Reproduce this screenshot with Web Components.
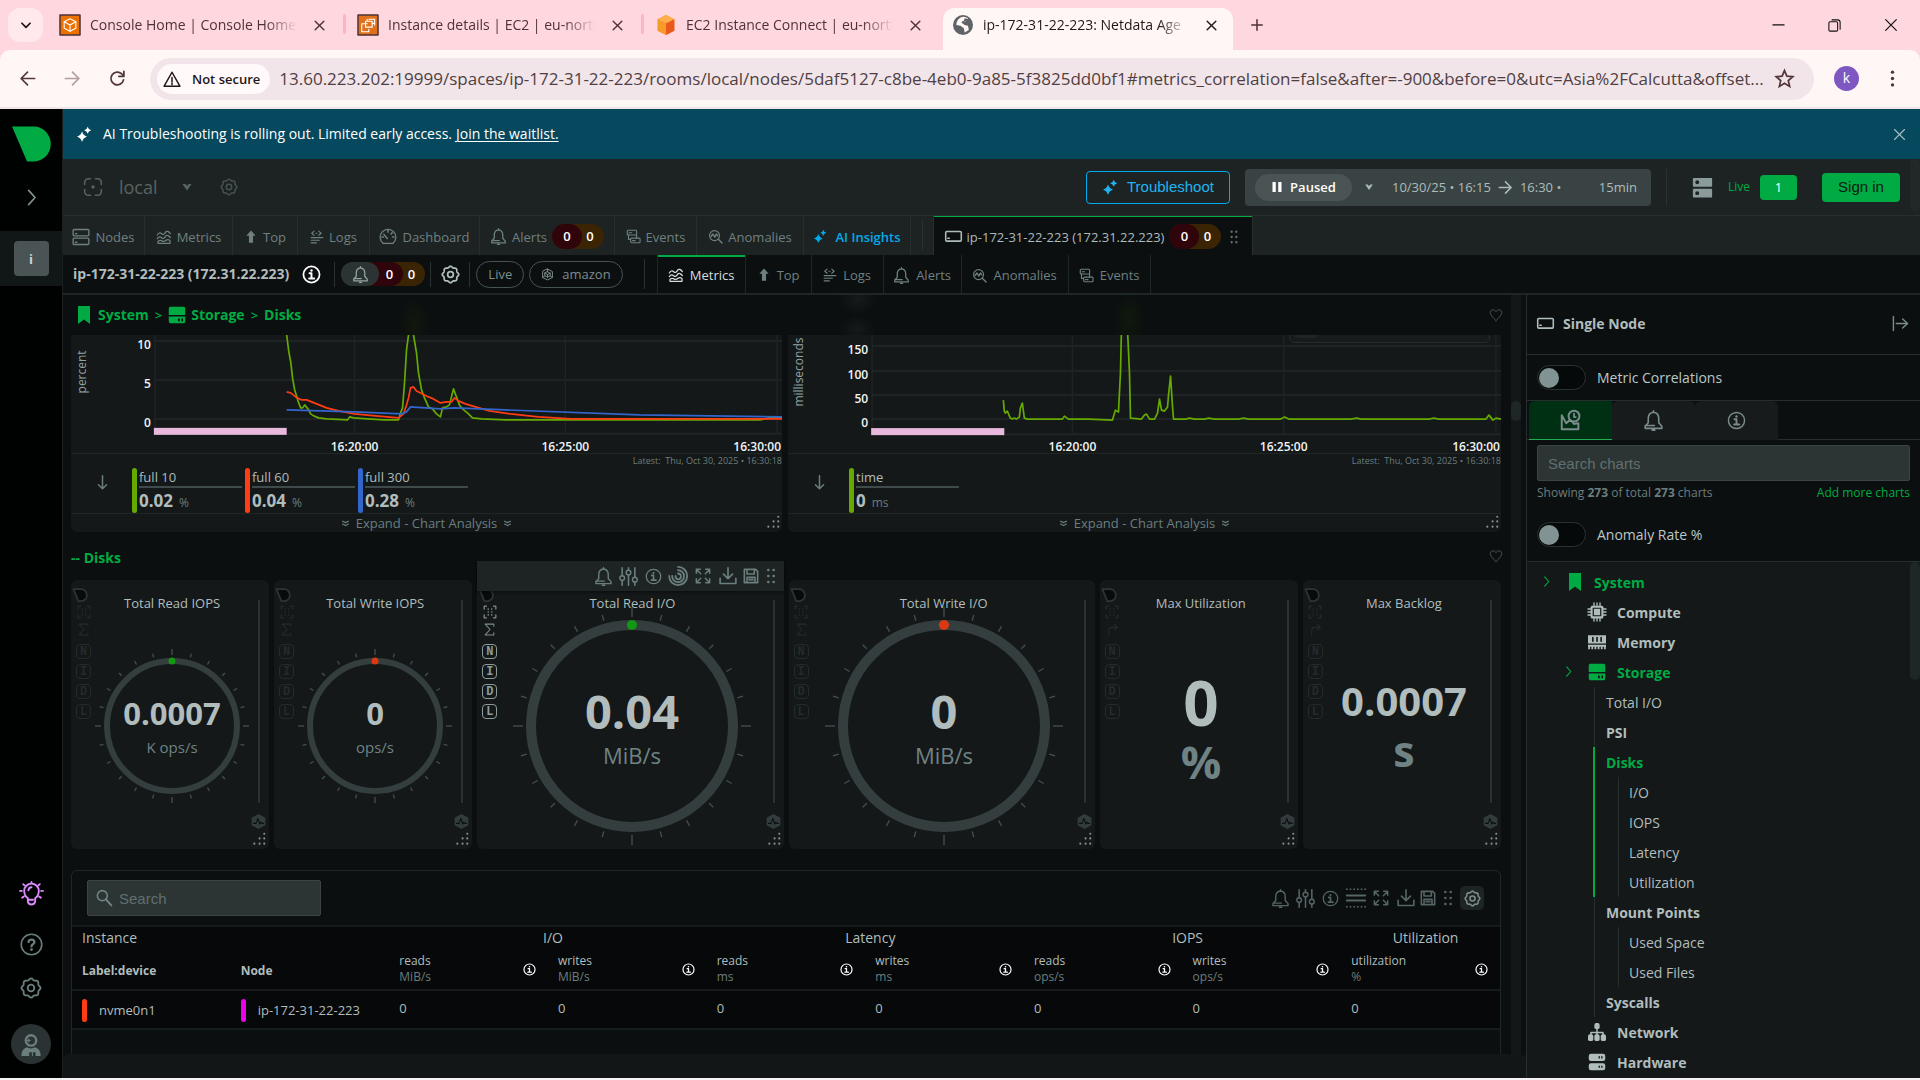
<!DOCTYPE html>
<html lang="en">
<head>
<meta charset="utf-8">
<title>ip-172-31-22-223: Netdata Agent</title>
<style>
  html, body { margin: 0; height: 100%; }
  body {
    font-family: "Open Sans", "Noto Sans", sans-serif;
    font-size: 13px; line-height: 18px; color: #aebbbb; background: #f4f4f4;
    --green: #00ab44; --muted: #6b7e7e; --dim: #6f8080; --text: #b1bdbd; --bright: #fff;
    --line: #1f2626; --card: #141819; --bg: #0b0f10; --bar: #1d2323;
    overflow: hidden;
  }
</style>
</head>
<body>
<nd-window></nd-window>
<script>
const wavy = (() => {
  let d = '';
  for (let i = 0; i <= 96; i++) {
    const a = i / 96 * Math.PI * 2, r = 9.6 + 0.8 * Math.cos(a * 8);
    d += (i ? 'L' : 'M') + (12 + r * Math.sin(a)).toFixed(2) + ' ' + (12 - r * Math.cos(a)).toFixed(2);
  }
  return `<path d="${d}Z"/><circle cx="12" cy="12" r="3.6"/>`;
})();
const dots = (pts, r = 1.5) => pts.map(p => `<circle cx="${p[0]}" cy="${p[1]}" r="${r}" fill="currentColor" stroke="none"/>`).join('');
const ICONS = {
  gear: wavy,
  down: '<path d="M5 9l7 7 7-7" stroke-width="3"/>',
  caret: '<path d="M3 6h6l3 4 3-4h6l-9 13z" fill="currentColor" stroke="none"/>',
  right: '<path d="M8 2l9 10-9 10" stroke-width="2.4"/>',
  close: '<path d="M4 4l16 16M20 4L4 20" stroke-width="2.6"/>',
  thinclose: '<path d="M4 4l16 16M20 4L4 20" stroke-width="1.8"/>',
  plus: '<path d="M12 3v18M3 12h18" stroke-width="2.6"/>',
  min: '<path d="M3 11h18" stroke-width="1.7"/>',
  restore: '<rect x="3" y="6" width="14" height="15" rx="2" stroke-width="1.7"/><path d="M8 3h9q4 0 4 4v11" stroke-width="1.7"/>',
  back: '<path d="M22 12H3M12 3l-9 9 9 9" stroke-width="2.4"/>',
  forward: '<path d="M2 12h19M12 3l9 9-9 9" stroke-width="2.4"/>',
  reload: '<path d="M20.5 14a9 9 0 1 1-2.500-8.500L21 8M21 2v7h-7" stroke-width="2.5"/>',
  warn: '<path d="M12 3L1.500 21.500h21z"/><path d="M12 10v6M12 17.500v2"/>',
  star: '<path d="M12 2l3 7 7.500.7-5.700 5 1.700 7.300-6.500-3.900L5.500 22l1.700-7.300-5.700-5L9 9z" stroke-width="2.2" stroke-linejoin="miter"/>',
  menu: dots([[12, 3], [12, 12], [12, 21]], 2.4),
  awshome: '<rect width="24" height="24" fill="#ed7100"/><g stroke="#fff" stroke-width="1.3"><path d="M12 4.500l7 3.700v7.600l-7 3.700-7-3.700V8.200z"/><path d="M5 8.200l7 3.800 7-3.800M12 12v7.500"/></g>',
  ec2: '<rect width="24" height="24" fill="#e0701a"/><g stroke="#fff" stroke-width="1.3"><rect x="9" y="7.500" width="8" height="7"/><path d="M13 5h7v7M11 10.500H4.500V20H13v-3M11 7V5M17 10h3"/></g>',
  ec2c: '<path d="M12 0l10 5v14l-10 5-10-5V5z" fill="#f58536" stroke="none"/><path d="M2 5l10 5v14L2 19z" fill="#f89a2a" stroke="none"/><path d="M22 5l-10 5v14l10-5z" fill="#e8591c" stroke="none"/><path d="M12 0l10 5-10 5L2 5z" fill="#ffae4a" stroke="none"/>',
  globe: '<circle cx="12" cy="12" r="12" fill="#5f6368" stroke="none"/><path d="M9 3q5-2 9 1l-3 4-3-1-2 2 4 3 4 1 1 5-5 3-1-5-4-3-5-1q0-6 5-9z" fill="#fff7f6" stroke="none"/><path d="M14 4l-1 3 2 1 4-3z" fill="#5f6368" stroke="none"/>',
  logo: '<path d="M0 1h14a10 10.500 0 0 1 0 22h-4.500z" fill="#00ab44" stroke="none"/>',
  logosm: '<path d="M2 3h11a8 8.500 0 0 1 0 17H9z" fill="#080b0b" stroke-width="2.4"/>',
  sparkle: '<g fill="currentColor" stroke="none"><path d="M8.500 7.500q1.500 6 7 7.500-5.500 1.500-7 7.500-1.500-6-7-7.500 5.500-1.500 7-7.500z"/><path d="M16.500 1q.9 4 5 5-4.100 1-5 5-.9-4-5-5 4.100-1 5-5z"/></g>',
  local: '<path d="M9 2H7Q2 2 2 7v2M15 2h2q5 0 5 5v2M9 22H7q-5 0-5-5v-2M15 22h2q5 0 5-5v-2" stroke-width="1.8"/><circle cx="12" cy="12" r="2" fill="currentColor" stroke="none"/>',
  nodes: '<rect x="1.500" y="2" width="21" height="8.500" rx="1.500"/><rect x="1.500" y="13.500" width="21" height="8.500" rx="1.500"/><path d="M4.500 7.500h2M4.500 19h2"/>',
  metrics: '<path d="M2 9q3-5 6.500-2t6-2.500q3-3 7 2.500M2 14.500q3-4.500 6.500-1.500t6-2.500q3.500-2.500 7 2.500M3 18.500v3h18v-4q-3-3-6-.5-3.500 3-6.500.5-3-1.500-5.500 1z" stroke-width="1.900"/>',
  top: '<path d="M12 1l8 9h-4.500v12h-7V10H4z" fill="currentColor" stroke="none"/>',
  logs: '<path d="M7 2L3 5.500 7 9M15 2l4 3.500L15 9M10 5.500h2M2 13h20M2 17.500h14M2 22h9" stroke-width="2"/>',
  dash: '<path d="M5.500 20.500a10.500 10.500 0 1 1 13 0z"/><path d="M11 14L6.500 8.500M12 3v2.500M20 12h-2M4 12h2M17.500 6.500l-1.500 1.500" stroke-width="2"/>',
  bell: '<path d="M12 2.500q6 .5 6 7.500v4.500l3.500 4v2.500h-19v-2.500l3.500-4V10q0-7 6-7.500zM2.500 17.800H13M10.500 23h3M12 1v1.500"/>',
  events: '<rect x="2" y="2" width="15" height="7.500" rx="1.500"/><rect x="7.500" y="14.500" width="15" height="7.500" rx="1.500"/><path d="M4 9.500v7h3M17 9.500v5M5 6h4M10.500 18.500h4"/>',
  anom: '<circle cx="10.500" cy="10.500" r="8"/><path d="M16.500 16.500l6 6M5 12l3-4 3 5 2.500-5 2 3" stroke-width="2.200"/>',
  node: '<rect x="1" y="5" width="22" height="13.500" rx="1.500" stroke-width="2.200"/><path d="M4 14.500h2" stroke-width="2.200"/>',
  grip: dots([[8, 3], [16, 3], [8, 12], [16, 12], [8, 21], [16, 21]], 2),
  info: '<circle cx="12" cy="12" r="10.200"/><path d="M9.500 10.500H12v6.500M9 17h6.500" stroke-width="2.400"/><circle cx="12" cy="7" r="1.500" fill="currentColor" stroke="none"/>',
  cube: '<path d="M12 2l9 4.500v11L12 22l-9-4.500v-11z"/><path d="M12 7l5 2.500v5L12 17l-5-2.500v-5zM7 9.500l5 2.500 5-2.500M12 12v5M12 2v5M3 17.500l4-3M21 17.500l-4-3"/>',
  pause: '<path d="M3 2h6.500v20H3zM14.500 2H21v20h-6.500z" fill="currentColor" stroke="none"/>',
  server: '<rect x="1" y="1" width="22" height="10" rx="1" fill="currentColor" stroke="none"/><rect x="1" y="13.500" width="22" height="10" rx="1" fill="currentColor" stroke="none"/><circle cx="6" cy="6" r="2.200" fill="#1d2323" stroke="none"/><circle cx="6" cy="18.500" r="2.200" fill="#1d2323" stroke="none"/>',
  bulb: '<path d="M8.500 16.500Q5 14 5 9.500a7 7 0 0 1 14 0q0 4.500-3.500 7v3.500q-1 2.500-3.500 2.500t-3.500-2.500zM8.500 18h5M9 9q.5-3 3-3M12 1v1.200M1 9.500h1.700M21.300 9.500H23M4 3l1.200 1M20 3l-1.200 1M3 16l1.500-1M21 16l-1.500-1"/>',
  help: '<circle cx="12" cy="12" r="10.700"/><path d="M9 9.500Q9 7 12 7t3 2.500q0 1.500-1.500 2.300T12 14" stroke-width="2.400"/><circle cx="12" cy="17.300" r="1.500" fill="currentColor" stroke="none"/>',
  astro: '<circle cx="12" cy="7" r="5.700" stroke-width="2.600"/><path d="M8 7h3M9.500 5.500v3" stroke-width="1.300"/><path d="M1.500 24q0-7.500 6-9.500 4.500 2.500 9 0 6 2 6 9.500H17v-4h-3v4h-1v-4h-3v4z" fill="currentColor" stroke="none"/>',
  bookmark: '<path d="M4 0h16v24l-8-6-8 6z" fill="currentColor" stroke="none"/>',
  disk: '<path d="M3 1h18q2 0 2 2.500V12H1V3.500Q1 1 3 1zM1 14h22v6q0 3-2 3H3q-2 0-2-3z" fill="currentColor" stroke="none"/><path d="M14.500 17.500v2M19 17.500v2" stroke="#0b0f10" stroke-width="2.200"/>',
  heart: '<path d="M12 21.500Q2 13 2 7.500 2.500 3 7 3q3.500 0 5 3.500Q13.500 3 17 3q4.500 0 5 4.500Q22 13 12 21.500z" stroke-width="1.600"/>',
  arrowdown: '<path d="M12 1v21M5.500 15.500L12 22l6.500-6.500" stroke-width="2.400"/>',
  dbl: '<path d="M2 4l10 5 10-5M2 14l10 5 10-5" stroke-width="4"/>',
  resize: dots([[21, 3], [13, 11], [21, 11], [4, 20], [13, 20], [21, 20]], 1.800),
  sliders: '<path d="M4 1v10M4 17v6M12 1v3M12 10v13M20 1v12M20 19v4" stroke-width="2"/><circle cx="4" cy="14" r="3"/><circle cx="12" cy="7" r="3"/><circle cx="20" cy="16" r="3"/>',
  radar: '<path d="M12 1a11 11 0 0 1 0 22A10.500 10.500 0 0 1 1.500 12M12 5a7 7 0 0 1 0 14.500A7.500 7.500 0 0 1 5 12M12 9a3.500 3.500 0 0 1 0 7 4 4 0 0 1-3-4" stroke-width="2.200"/>',
  expand: '<path d="M2 8V2h6M16 2h6v6M22 16v6h-6M8 22H2v-6M2 2l6.500 6.500M22 2l-6.500 6.500M22 22l-6.500-6.500M2 22l6.500-6.500" stroke-width="2.200"/>',
  download: '<path d="M12 1v14M6 9.500l6 6 6-6M1.500 15v7h21v-7" stroke-width="2.200"/>',
  save: '<path d="M2 2h17l3 3v17H2zM6 2v7h11V2M6 22v-8h12v8M9 17.500h6" stroke-width="2.400"/>',
  rows: '<path d="M1 9h22M1 15h22" stroke-width="2.400"/><path d="M0 1.500h24M0 22.500h24" stroke-dasharray="2 2.400" stroke-linecap="butt" stroke-width="2"/>',
  bracket: '<path d="M2 7V2h4M18 2h4v5M22 17v5h-4M6 22H2v-5" stroke-width="2.200"/>' + dots([[9, 7], [15, 7], [9, 12], [15, 12], [9, 17], [15, 17]], 1.400),
  sigma: '<path d="M20 6V2H4l9 10-9 10h16v-4" stroke-width="2"/>',
  curve: '<path d="M5 22v-8q0-6 6-6h10M16 3l5 5-5 5" stroke-width="2"/>',
  hex: '<path d="M12 0l11 6v12l-11 6-11-6V6z" fill="currentColor" stroke="none"/><path d="M4 15h4l3-8 3 9 2-3 1.500 2H20" stroke="#0b0f10" stroke-width="1.700"/>',
  search: '<circle cx="9.500" cy="8.500" r="7.500" stroke-width="2.400"/><path d="M15 14l8 9" stroke-width="3"/>',
  collapse: '<path d="M2 2v20M6 12h16M15 5.500l7 6.500-7 6.500" stroke-width="2"/>',
  chart: '<path d="M2 6v16h19v-7l-5 1-4-5-5 4z" stroke-width="2.200"/><circle cx="16" cy="7" r="6.200" stroke-width="2.200" fill="#003014"/><path d="M16 4v4h2" stroke-width="2"/>',
  cpu: '<rect x="3.500" y="3.500" width="17" height="17" rx="2" fill="currentColor" stroke="none"/><rect x="7" y="7" width="10" height="10" fill="none" stroke="#141819" stroke-width="1.600"/><path d="M8 0v24M12 0v4M12 20v4M16 0v4M16 20v4M8 0v4M0 8h4M0 12h4M0 16h4M20 8h4M20 12h4M20 16h4" stroke-dasharray="4 16" stroke-width="1.800"/>',
  ram: '<path d="M0 3h24v11H0z" fill="currentColor" stroke="none"/><path d="M6.500 6v5M12 6v5M17.500 6v5" stroke="#141819" stroke-width="2.200"/><path d="M0 17h24M1.500 18v3.500M5.700 18v3.500M9.900 18v3.500M14.100 18v3.500M18.300 18v3.500M22.500 18v3.500"  stroke-width="2.400" stroke-linecap="butt"/>',
  net: '<path d="M12 7v6M4 16v-3.500h16V16M12 13v3" stroke-width="2"/><g fill="currentColor" stroke="none"><rect x="8.500" y="0" width="7" height="8" rx="2.500"/><rect x="0" y="15" width="7" height="9" rx="2.500"/><rect x="8.500" y="15" width="7" height="9" rx="2.500"/><rect x="17" y="15" width="7" height="9" rx="2.500"/></g>',
  hw: '<g fill="currentColor" stroke="none"><rect x="1" y="1" width="22" height="9.500" rx="3"/><rect x="1" y="13.500" width="22" height="9.500" rx="3"/></g><path d="M15 5v1.500M18.500 5v1.500M15 17.500V19M18.500 17.500V19" stroke="#141819" stroke-width="1.800"/>'
};

const BASE = `
  *, *::before, *::after { box-sizing: border-box; }
  button { font: inherit; color: inherit; background: none; border: 0; padding: 0; margin: 0; display: flex; align-items: center; cursor: pointer; }
  a { color: inherit; text-decoration: none; }
  input { font: inherit; color: inherit; margin: 0; }`;
function define(name, css, render) {
  customElements.define(name, class extends HTMLElement {
    constructor() { super(); this.attachShadow({ mode: 'open' }); }
    connectedCallback() {
      const a = (k, d = '') => this.getAttribute(k) ?? d;
      this.shadowRoot.innerHTML = `<style>${BASE}${css}</style>${typeof render === 'function' ? render(a, this) : render}`;
    }
  });
}

define('nd-icon', `:host { display: inline-flex; flex: none; width: var(--s, 16px); height: var(--s, 16px); } svg { width: 100%; height: 100%; display: block; overflow: visible; }`,
  a => {
    const s = a('size', '16');
    return `<style>:host { --s: ${s}px; }</style><svg viewBox="0 0 24 24" fill="none" stroke="currentColor" stroke-width="${a('w', '1.8')}" stroke-linecap="round" stroke-linejoin="round" aria-hidden="true">${ICONS[a('name')]}</svg>`;
  });

/* ---------- browser frame ---------- */
define('br-tab', `
  :host { display: flex; flex: 0 1 298px; height: 42px; align-items: center; padding: 0 14px 8px 15px; gap: 10px; color: #4e3238; position: relative; min-width: 0; }
  :host([sep])::after { content: ""; position: absolute; right: -3px; top: 6px; width: 3px; height: 20px; border-radius: 2px; background: #ffb4c2; }
  :host([active]) { background: #fff7f6; border-radius: 12px 12px 0 0; color: #221518; flex-basis: 290px; padding-left: 10px; padding-right: 12px; margin-left: 4px; }
  .t { flex: 1; min-width: 0; overflow: hidden; white-space: nowrap; -webkit-mask-image: linear-gradient(90deg, #000 85%, transparent); mask-image: linear-gradient(90deg, #000 85%, transparent); }
  button { flex: none; margin: 0 1px 0 4px; padding: 2px; }`,
  a => `<nd-icon name="${a('icon')}" size="20"></nd-icon><span class="t"><slot></slot></span><button aria-label="Close tab"><nd-icon name="close" size="13"></nd-icon></button>`);

define('br-frame', `
  :host { display: block; flex: none; font-size: 14px; line-height: 20px; }
  .strip { height: 50px; background: #ffd7de; display: flex; align-items: flex-start; padding: 8px 0 0 8px; }
  .find { width: 35px; height: 34px; border-radius: 12px; background: #ffe9ec; justify-content: center; color: #221518; margin-right: 2px; }
  .plus { margin: 10px 0 0 17px; color: #4e3238; }
  .win { margin-left: auto; display: flex; gap: 41px; padding: 9px 21px 0 0; color: #111; }
  .tool { height: 59px; background: #fff7f6; border-bottom: 2px solid #f3e4e7; border-radius: 10px 10px 0 0; display: flex; align-items: center; padding: 0 19px; color: #53363c; }
  .nav { display: flex; gap: 28px; margin-right: 24px; }
  .nav button:nth-child(2) { opacity: .45; }
  .omni { flex: 1; min-width: 0; height: 42px; border-radius: 21px; background: #f2e5e9; display: flex; align-items: center; padding: 0 20px 0 7px; }
  .chip { height: 30px; border-radius: 15px; background: #fff9f9; padding: 0 10px 0 6px; gap: 11px; color: #221518; font-weight: 600; font-size: 13px; flex: none; }
  input { flex: 1; min-width: 0; border: 0; background: none; outline: 0; padding: 0; margin: 0 8px 0 9px; font-size: 17px; color: #4f3f43; text-overflow: ellipsis; }
  .av { width: 25px; height: 25px; border-radius: 50%; background: #7e57c2; color: #fff; justify-content: center; font-size: 14px; margin: 0 25px 0 20px; padding-bottom: 2px; }
  .under { background: #ffd7de; }`,
  `<div class="strip"><button class="find" aria-label="Search tabs"><nd-icon name="down" size="14"></nd-icon></button>
    <br-tab icon="awshome" sep>Console Home | Console Home</br-tab><br-tab icon="ec2" sep>Instance details | EC2 | eu-north</br-tab><br-tab icon="ec2c">EC2 Instance Connect | eu-north</br-tab><br-tab icon="globe" active>ip-172-31-22-223: Netdata Age</br-tab>
    <button class="plus" aria-label="New tab"><nd-icon name="plus" size="14"></nd-icon></button>
    <div class="win"><button aria-label="Minimize"><nd-icon name="min" size="15"></nd-icon></button><button aria-label="Restore"><nd-icon name="restore" size="15"></nd-icon></button><button aria-label="Close"><nd-icon name="thinclose" size="16"></nd-icon></button></div></div>
   <div class="under"><div class="tool"><div class="nav"><button aria-label="Back"><nd-icon name="back" size="17"></nd-icon></button><button aria-label="Forward"><nd-icon name="forward" size="17"></nd-icon></button><button aria-label="Reload"><nd-icon name="reload" size="17"></nd-icon></button></div>
    <div class="omni"><button class="chip"><nd-icon name="warn" size="18" w="2"></nd-icon>Not secure</button><input aria-label="Address" value="13.60.223.202:19999/spaces/ip-172-31-22-223/rooms/local/nodes/5daf5127-c8be-4eb0-9a85-5f3825dd0bf1#metrics_correlation=false&amp;after=-900&amp;before=0&amp;utc=Asia%2FCalcutta&amp;offset..."><button aria-label="Bookmark"><nd-icon name="star" size="19"></nd-icon></button></div>
    <button class="av">k</button><button aria-label="Menu"><nd-icon name="menu" size="17"></nd-icon></button></div></div>`);

/* ---------- application shell ---------- */
define('nd-sidebar', `
  :host { display: flex; flex-direction: column; align-items: center; width: 63px; flex: none; background: #000201; border-right: 1px solid #1b2020; color: var(--muted); padding: 16px 0 14px; }
  .sp { width: 100%; height: 55px; background: #111616; display: flex; align-items: center; justify-content: center; margin-top: 25px; }
  .sp button { width: 35px; height: 35px; border-radius: 4px; background: #4a5454; color: #cdd6d6; justify-content: center; font-weight: 700; font-size: 13px; }
  .logo { margin: 0; } .chev { margin-top: 26px; color: #7f9191; }
  .bulb { margin-top: auto; color: #dd8cff; } .q { margin-top: 27px; } .g { margin-top: 21px; }
  .me { margin-top: 25px; width: 40px; height: 40px; border-radius: 50%; background: #2a3233; justify-content: center; }
  .me nd-icon { margin-top: 2px; }`,
  `<button class="logo" aria-label="Netdata"><nd-icon name="logo" size="38"></nd-icon></button><button class="chev" aria-label="Expand"><nd-icon name="right" size="17"></nd-icon></button>
   <div class="sp"><button>i</button></div>
   <button class="bulb" aria-label="Tips"><nd-icon name="bulb" size="25"></nd-icon></button><button class="q" aria-label="Help"><nd-icon name="help" size="23" w="1.7"></nd-icon></button><button class="g" aria-label="Settings"><nd-icon name="gear" size="22" w="2"></nd-icon></button>
   <button class="me" aria-label="Profile"><nd-icon name="astro" size="22"></nd-icon></button>`);

define('nd-banner', `
  :host { display: flex; align-items: center; height: 50px; flex: none; background: #06485e; color: #fff; padding: 0 13px; font-size: 14px; }
  nd-icon { margin-right: 10px; } a { text-decoration: underline; text-underline-offset: 2px; } p { margin: 0; flex: 1; } button nd-icon { margin: 0; color: #a9bfc6; } span { padding-right: 4px; }`,
  `<nd-icon name="sparkle" size="17"></nd-icon><p><span>AI Troubleshooting is rolling out. Limited early access.</span><a href="#">Join the waitlist.</a></p><button aria-label="Dismiss"><nd-icon name="thinclose" size="15" w="2.2"></nd-icon></button>`);

define('nd-header', `
  :host { display: flex; align-items: center; height: 57px; flex: none; background: var(--bar); border-bottom: 1px solid #272e2e; padding: 0 20px; color: #586464; position: relative; }
  .room { font-size: 18px; gap: 16px; } .room span { margin-right: 7px; } .cog { margin-left: 27px; color: #465252; }
  .ts { margin-left: auto; height: 33px; width: 144px; justify-content: center; gap: 8px; border: 1px solid #00abeb; border-radius: 4px; color: #1fb4f0; font-family: "Liberation Sans", sans-serif; font-size: 15px; }
  .time { margin-left: 15px; width: 406px; height: 37px; border-radius: 4px; background: #394343; display: flex; align-items: center; padding: 0 14px 0 10px; color: #aebbbb; font-size: 12px; white-space: nowrap; }
  .pill { height: 27px; width: 97px; border-radius: 14px; background: #4a5454; color: #fff; gap: 7px; justify-content: center; font-family: "Open Sans"; font-size: 13px; margin-right: 12px; font-weight: 600; }
  .time .d { margin-left: 18px; display: flex; align-items: center; gap: 7px; font-size: 13px; } .dur { margin-left: auto; font-size: 13px; }
  .sep { width: 1px; height: 37px; background: #2a3131; margin: 0 25px 0 15px; }
  .srv { color: #8b9b9b; } .live { color: var(--green); margin: 0 10px 0 15px; font-size: 12px; }
  .n { width: 37px; height: 25px; background: var(--green); border-radius: 4px; color: #fff; display: flex; justify-content: center; align-items: center; font-size: 13px; }
  .sign { margin-left: 25px; width: 78px; height: 29px; border-radius: 4px; background: var(--green); color: #0c1a12; justify-content: center; font-family: "Liberation Sans", sans-serif; font-size: 15px; }
  :host::after { content: ""; position: absolute; right: 0; top: 0; width: 10px; height: 52px; background: #222828; border-radius: 5px; }`,
  `<button class="room"><nd-icon name="local" size="20"></nd-icon><span>local</span><nd-icon name="caret" size="12"></nd-icon></button><button class="cog" aria-label="Room settings"><nd-icon name="gear" size="18" w="2"></nd-icon></button>
   <button class="ts"><nd-icon name="sparkle" size="17"></nd-icon>Troubleshoot</button>
   <div class="time"><button class="pill"><nd-icon name="pause" size="12"></nd-icon>Paused</button><nd-icon name="caret" size="10"></nd-icon><span class="d"><span>10/30/25 • 16:15</span><nd-icon name="forward" size="15" w="1.5"></nd-icon><span>16:30 •</span></span><span class="dur">15min</span></div>
   <span class="sep"></span><nd-icon class="srv" name="server" size="21"></nd-icon><span class="live">Live</span><span class="n">1</span><button class="sign">Sign in</button>`);

define('nd-counts', `
  :host { display: inline-flex; height: 25px; color: #fff; font-weight: 600; font-size: 13px; border-radius: 13px; background: #3a2403; flex: none; }
  span { width: 26px; display: flex; align-items: center; justify-content: center; }
  .c { background: #2f040a; border-radius: 13px; width: 30px; } .w { width: 22px; padding-right: 6px; }
  .b { width: 38px; color: #93a3a3; } :host([bell]) { background: linear-gradient(90deg, #2c3333 40%, #3a2403 40%); height: 24px; width: 84px; }
  :host([bell]) .b { background: #2c3333; border-radius: 12px; position: relative; z-index: 1; } :host([bell]) .c { margin-left: -12px; padding-left: 8px; width: 36px; border-radius: 0 12px 12px 0; }`,
  (a, el) => `${el.hasAttribute('bell') ? '<span class="b"><nd-icon name="bell" size="17"></nd-icon></span>' : ''}<span class="c">0</span><span class="w">0</span>`);

define('nd-tab', `
  :host { display: flex; flex: none; border-right: 1px solid #272e2e; color: var(--dim); font-size: 13px; white-space: nowrap; }
  button { gap: 5px; padding: 2px 0 0; } nd-counts { margin: -1px 0 0; }
  :host([active]) { background: var(--bg); color: #aebbbb; box-shadow: inset 0 1px var(--green); border-left: 1px solid #272e2e; }
  :host([sub]) { border-color: #1f2626; } :host([sub]) button { gap: 6px; } :host([sub][active]) { box-shadow: inset 0 2px var(--green); color: #d5dede; }
  :host([ai]) { color: #00abeb; } :host([ai]) button { gap: 7px; font-weight: 600; } .gr { color: #66716f; margin-left: 1px; }`,
  (a, el) => `<button><nd-icon name="${a('icon')}" size="${a('size', '16')}"></nd-icon><slot></slot>${el.hasAttribute('counts') ? '<nd-counts></nd-counts>' : ''}${el.hasAttribute('grip') ? '<nd-icon class="gr" name="grip" size="14"></nd-icon>' : ''}</button>`);

define('nd-tabbar', `
  :host { display: flex; height: 39px; flex: none; background: var(--bar); }
  .sep { width: 1px; height: 30px; margin: 4px 10px 0 11px; background: #2a3131; }
  nd-tab { justify-content: center; }
  .w1 { width: 82px; } .w2 { width: 88px; } .w3 { width: 65px; } .w4 { width: 72px; } .w5 { width: 110px; } .w6 { width: 135px; } .w7 { width: 82px; } .w8 { width: 107px; } .w9 { width: 107px; } .w10 { width: 320px; }`,
  `<nd-tab class="w1" icon="nodes" size="18">Nodes</nd-tab><nd-tab class="w2" icon="metrics">Metrics</nd-tab><nd-tab class="w3" icon="top" size="14">Top</nd-tab><nd-tab class="w4" icon="logs" size="14">Logs</nd-tab><nd-tab class="w5" icon="dash" size="18">Dashboard</nd-tab><nd-tab class="w6" icon="bell" size="17" counts>Alerts</nd-tab><nd-tab class="w7" icon="events" size="15">Events</nd-tab><nd-tab class="w8" icon="anom" size="15">Anomalies</nd-tab><nd-tab class="w9" icon="sparkle" size="15" ai>AI Insights</nd-tab><span class="sep"></span><nd-tab class="w10" icon="node" size="17" active counts grip>ip-172-31-22-223 (172.31.22.223)</nd-tab>`);

define('nd-nodebar', `
  :host { display: flex; align-items: center; height: 40px; flex: none; background: var(--bg); border-bottom: 2px solid var(--line); padding-left: 10px; color: var(--text); }
  b { font-size: 14px; margin-right: 13px; } .i { color: #fff; } .sep { width: 1px; height: 25px; background: #2a3131; }
  .s1 { margin: 0 6px 0 13px; } .s2 { margin: 0 10px 0 5px; } .s3 { margin: 0 6px 0 9px; } .s4 { margin-left: 16px; height: 30px; }
  .pill { height: 27px; border: 1px solid #475454; border-radius: 14px; padding: 0 11px; gap: 8px; color: #7d8d8d; font-size: 13px; margin-right: 5px; }
  nav { display: flex; align-self: stretch; margin-left: 12px; } nd-tab { justify-content: center; }
  .w1 { width: 89px; } .w2 { width: 66px; } .w3 { width: 72px; } .w4 { width: 78px; } .w5 { width: 107px; } .w6 { width: 82px; }`,
  `<b>ip-172-31-22-223 (172.31.22.223)</b><button class="i" aria-label="Node info"><nd-icon name="info" size="19" w="2.2"></nd-icon></button><span class="sep s1"></span><nd-counts bell></nd-counts><span class="sep s2"></span><button aria-label="Configure"><nd-icon name="gear" size="19" w="2.2"></nd-icon></button><span class="sep s3"></span>
   <button class="pill">Live</button><button class="pill"><nd-icon name="cube" size="13"></nd-icon>amazon</button><span class="sep s4"></span>
   <nav><nd-tab sub active class="w1" icon="metrics">Metrics</nd-tab><nd-tab sub class="w2" icon="top" size="14">Top</nd-tab><nd-tab sub class="w3" icon="logs" size="14">Logs</nd-tab><nd-tab sub class="w4" icon="bell" size="17">Alerts</nd-tab><nd-tab sub class="w5" icon="anom" size="15">Anomalies</nd-tab><nd-tab sub class="w6" icon="events" size="15">Events</nd-tab></nav>`);

/* ---------- charts ---------- */
const CHARTS = {
  psi: {
    unit: 'percent', uy: -37, ticks: [[6, '10'], [45, '5'], [84, '0']],
    lines: [
      ['#66aa00', '216,-6 216,0 218,16 220,27 222,44 224,55 228,68 230,73 232,73 234,70 238,75 240,79 243,81 248,83 256,84 277,85 279,82 283,83 297,84 313,85 328,85 330,78 332,73 334,48 336,15 338,0 338,-6 343,-6 343,0 346,18 348,38 351,55 354,63 358,72 362,74 366,79 370,82 372,73 376,72 379,70 383,54 386,62 389,70 392,74 397,78 402,83 411,84 435,85 690,85 700,83 712,83'],
      ['#ff3c14', '216,57 220,58 225,62 231,65 236,65 246,69 256,73 268,76 284,79 305,81 328,83 333,79 336,70 338,63 340,53 343,52 346,56 352,59 358,62 363,64 370,68 376,67 381,67 384,63 388,66 395,69 405,72 419,76 440,79 468,82 501,84 569,84 712,84'],
      ['#3366cc', '216,75 284,77 331,79 336,77 340,72 370,74 384,73 435,75 569,80 712,82']
    ]
  },
  time: {
    unit: 'milliseconds', uy: -37, ticks: [[11, '150'], [36, '100'], [60, '50'], [84, '0']],
    lines: [['#66aa00', '215,65 216,76 217,78 219,76 222,83 224,84 226,83 228,84 231,82 232,73 234,68 236,83 239,84 259,84 274,84 276,81 280,84 300,84 324,85 327,75 330,77 332,38 333,-6 339,-6 341,38 342,83 353,84 356,80 358,79 361,84 366,84 369,78 371,64 373,75 376,76 379,72 380,60 382,41 384,72 385,84 397,84 401,83 406,84 416,84 420,83 426,84 450,84 455,83 460,84 492,84 496,82 500,84 562,84 568,83 572,84 640,84 645,83 650,84 697,84 700,80 704,85 707,83 712,84']]
  }
};
define('nd-plot', `:host { display: block; height: 119px; border-bottom: 1px solid var(--line); } svg { width: 100%; height: auto; display: block; overflow: visible; } text { font-family: "Open Sans", sans-serif; }`,
  a => {
    const c = CHARTS[a('chart')];
    return `<svg viewBox="0 0 712 119" fill="none">
      <g stroke="#1e2425" stroke-width="2">${c.ticks.map(t => `<path d="M84 ${t[0]}H712"/>`).join('')}<path d="M84 99H712" />${[84, 284, 495, 707].map(x => `<path d="M${x} 0V99" stroke-width="1.5"/>`).join('')}</g>
      <rect x="83" y="93" width="133" height="7" fill="#e8b9dc"/>
      <g fill="#f2f5f5" font-size="12" font-weight="600">${c.ticks.map(t => `<text x="80" y="${t[0] + 8}" text-anchor="end">${t[1]}</text>`).join('')}
      <text x="284" y="116" text-anchor="middle">16:20:00</text><text x="495" y="116" text-anchor="middle">16:25:00</text><text x="711" y="116" text-anchor="end">16:30:00</text></g>
      <text transform="rotate(-90)" x="${c.uy}" y="15" text-anchor="middle" font-size="12" fill="#93a3a3">${c.unit}</text>
      ${c.lines.map(l => `<polyline points="${l[1]}" stroke="${l[0]}" stroke-width="1.7" stroke-linejoin="round"/>`).join('')}</svg>`;
  });

define('nd-dim', `:host { display: flex; width: 113px; height: 45px; gap: 2px; } i { width: 5px; border-radius: 3px; } div { flex: 1; padding-right: 3px; font-size: 13px; line-height: 18px; }
  .n { border-bottom: 2px solid #3f4b4b; height: 20px; padding: 0; } .v { display: flex; align-items: baseline; gap: 6px; padding: 0; line-height: 26px; color: var(--muted); font-size: 12px; } b { font-size: 17px; color: var(--text); }`,
  a => `<i style="background:${a('color')}"></i><div><div class="n"><slot></slot></div><div class="v"><b>${a('value')}</b><span>${a('unit')}</span></div></div>`);

define('nd-chart', `
  :host { display: block; background: var(--card); border-radius: 0 0 6px 6px; position: relative; height: 197px; overflow: hidden; }
  .latest { text-align: right; font-size: 9px; line-height: 14px; color: var(--muted); white-space: pre; }
  .legend { display: flex; height: 45px; padding-left: 24px; } .legend nd-icon { margin: 7px 22px 0 0; color: var(--muted); }
  .foot { height: 19px; border-top: 1px solid var(--line); justify-content: center; color: var(--muted); font-size: 13px; gap: 7px; width: 100%; }
  .rs { position: absolute; right: 2px; bottom: 3px; color: #87908f; }
  .tools { position: absolute; right: 11px; top: -22px; width: 201px; height: 30px; border: 1px solid #262c2c; border-radius: 5px; background: #171b1c; display: flex; justify-content: space-between; align-items: center; padding: 0 5px 3px 4px; color: #8b9797; }
  .tools span { display: flex; justify-content: center; align-items: center; width: 25px; height: 23px; background: #202626; border-radius: 5px; }`,
  (a, el) => `<nd-plot chart="${a('chart')}"></nd-plot>${el.hasAttribute('tools') ? '<div class="tools"><span><nd-icon name="hex" size="17"></nd-icon></span>' + ['arrowdown', 'curve', 'sliders', 'arrowdown', 'plus', 'search'].map(n => `<nd-icon name="${n}" size="16"></nd-icon>`).join('') + '</div>' : ''}<div class="latest">Latest:  Thu, Oct 30, 2025 • 16:30:18</div><div class="legend"><nd-icon name="arrowdown" size="15"></nd-icon><slot></slot></div><button class="foot"><nd-icon name="dbl" size="7"></nd-icon>Expand - Chart Analysis<nd-icon name="dbl" size="7"></nd-icon></button><nd-icon class="rs" name="resize" size="14" aria-hidden="true"></nd-icon>`);

const polar = (cx, cy, r, deg) => [(cx + r * Math.sin(deg * Math.PI / 180)).toFixed(1), (cy - r * Math.cos(deg * Math.PI / 180)).toFixed(1)].join(' ');
define('nd-gauge', `
  :host { display: block; position: relative; background: var(--card); border-radius: 6px; height: 269px; min-width: 0; }
  h3 { margin: 0; padding: 14px 0 0 4px; text-align: center; font-weight: 400; font-size: 13px; line-height: 18px; color: var(--text); }
  .rail { position: absolute; left: 5px; top: 25px; width: 15px; display: flex; flex-direction: column; align-items: center; color: #242b2b; }
  .lg { position: absolute; left: 1px; top: 7px; color: #2d3535; }
  .rail nd-icon { margin-bottom: 4px; } .rail button { width: 15px; height: 15px; border: 1px solid; border-radius: 4px; font: 700 12px/12px "Liberation Mono", monospace; justify-content: center; margin-top: 5px; }
  .rail nd-icon + button { margin-top: 4px; }
  :host([hover]) .rail { color: #7c8c8c; } :host([hover]) .rail button { color: #8b9b9b; }
  svg { position: absolute; left: calc(50% + 2px - 125px); top: 21px; width: 250px; height: 250px; }
  .track { position: absolute; right: 9px; top: 20px; width: 2px; height: 203px; background: #2a3132; }
  .hx { position: absolute; right: 3px; top: 234px; color: #333c3d; } .rs { position: absolute; right: 3px; bottom: 3px; color: #87908f; }
  .tb { position: absolute; left: 0; right: 0; top: -19px; height: 30px; background: #1e2424; display: flex; align-items: center; justify-content: flex-end; padding-right: 6px; color: var(--muted); box-shadow: 0 1px 3px #0008; }
  text { font-family: "Open Sans", sans-serif; text-anchor: middle; }`,
  (a, el) => {
    const r = +a('r', '0'), big = r > 80; let g = '';
    if (r) {
      for (let i = 0; i < 24; i++) {
        const card = i % 6 === 0, r0 = r + (big ? 8 : 6), r1 = r0 + (card ? (big ? 10 : 6) : (big ? 6 : 4));
        g += `<path d="M${polar(125, 125, r0, i * 15)}L${polar(125, 125, r1, i * 15)}" stroke="#465051" stroke-width="1.3"/>`;
      }
      g += `<circle cx="125" cy="125" r="${r}" stroke="#353e3f" stroke-width="${big ? 10 : 6}"/><circle cx="125" cy="${125 - r}" r="${big ? 5 : 3.5}" fill="${a('dot')}"/>`;
    }
    g += `<text x="125" y="${a('vy')}" font-size="${a('vs')}" font-weight="700" fill="#b1bdbd">${a('value')}</text><text x="125" y="${a('uy')}" font-size="${a('us')}" ${r ? '' : 'font-weight="700"'} fill="#6f8384">${a('unit')}</text>`;
    return `<nd-icon class="lg" name="logosm" size="17"></nd-icon><div class="rail"><nd-icon name="bracket" size="14"></nd-icon><nd-icon name="${r ? 'sigma' : 'curve'}" size="13"></nd-icon><button>N</button><button>I</button><button>D</button><button>L</button></div>
      <h3><slot></slot></h3><svg viewBox="0 0 250 250" fill="none">${g}</svg><span class="track"></span><nd-icon class="hx" name="hex" size="15"></nd-icon><nd-icon class="rs" name="resize" size="14"></nd-icon>
      ${el.hasAttribute('hover') ? '<div class="tb"><nd-tools kind="radar"></nd-tools></div>' : ''}`;
  });

define('nd-tools', `:host { display: flex; align-items: center; gap: 6px; } button { width: 19px; justify-content: center; } .n { width: 14px; }`,
  a => ['bell 19', 'sliders 19', 'info 17', a('kind') + ' 20', 'expand 16', 'download 18', 'save 16', 'grip 16'].map((s, i) => {
    const [n, z] = s.split(' ');
    return `<button class="${i > 5 ? 'n' : ''}" aria-label="${n}"><nd-icon name="${n}" size="${z}"></nd-icon></button>`;
  }).join(''));

/* ---------- table ---------- */
define('nd-search', `
  :host { display: flex; align-items: center; height: 36px; background: #2d3434; border: 1px solid #3b4444; border-radius: 2px; padding: 0 8px; gap: 7px; color: #6f8384; }
  input { flex: 1; min-width: 0; border: 0; outline: 0; background: none; padding: 0 2px; font: 15px "Liberation Sans", sans-serif; color: #b1bdbd; } nd-icon + input { padding: 0; } input::placeholder { color: #5f7070; opacity: 1; }`,
  a => `${a('icon') ? '<nd-icon name="search" size="16"></nd-icon>' : ''}<input type="search" aria-label="${a('label')}" placeholder="${a('label')}">`);

define('nd-table', `
  :host { display: flex; flex-direction: column; flex: 1; min-height: 0; border: 1px solid var(--line); border-bottom: 0; border-radius: 6px 6px 0 0; color: var(--text); overflow: hidden; }
  .bar { display: flex; align-items: center; height: 54px; padding: 0 16px 0 15px; color: #556464; flex: none; } nd-search { width: 234px; } nd-tools { margin-left: auto; }
  .cfg { margin-left: 5px; width: 24px; height: 24px; border-radius: 5px; background: #1e2424; color: #7c8c8c; justify-content: center; }
  table { width: 100%; table-layout: fixed; border-collapse: collapse; background: #060809; border-top: 2px solid #151a1a; }
  th, td { padding: 0 0 0 10px; font-weight: 400; text-align: left; font-size: 12px; line-height: 16px; vertical-align: middle; }
  .g th { font-size: 14px; height: 24px; line-height: 20px; padding-bottom: 2px; } .g th + th { text-align: center; }
  .s th { height: 40px; vertical-align: top; padding-top: 3px; } .s th:nth-child(-n+2) { font-weight: 700; vertical-align: middle; }
  .h { display: flex; align-items: center; justify-content: space-between; padding-right: 12px; } .h nd-icon { color: #fff; } small { display: block; font-size: 12px; color: var(--muted); line-height: 16px; }
  tbody tr { border-top: 2px solid #151a1a; border-bottom: 2px solid #151a1a; } td { height: 39px; padding-bottom: 4px; font-size: 13px; } .m { display: flex; align-items: center; gap: 12px; padding-top: 5px; } .m i { width: 5px; height: 23px; border-radius: 3px; }`,
  `<div class="bar"><nd-search icon="1" label="Search"></nd-search><nd-tools kind="rows"></nd-tools><button class="cfg" aria-label="Table settings"><nd-icon name="gear" size="17" w="2.2"></nd-icon></button></div>
   <table><thead><tr class="g"><th colspan="2">Instance</th><th colspan="2">I/O</th><th colspan="2">Latency</th><th colspan="2">IOPS</th><th>Utilization</th></tr>
   <tr class="s"><th>Label:device</th><th>Node</th>${[['reads', 'MiB/s'], ['writes', 'MiB/s'], ['reads', 'ms'], ['writes', 'ms'], ['reads', 'ops/s'], ['writes', 'ops/s'], ['utilization', '%']].map(c => `<th><div class="h"><span>${c[0]}<small>${c[1]}</small></span><nd-icon name="info" size="13" w="2.2"></nd-icon></div></th>`).join('')}</tr></thead>
   <tbody><tr><td><span class="m"><i style="background:#ff3c14"></i>nvme0n1</span></td><td><span class="m"><i style="background:#ee00ee"></i>ip-172-31-22-223</span></td>${'<td>0</td>'.repeat(7)}</tr></tbody></table>`);

define('nd-main', `
  :host { display: flex; flex: 1; min-width: 0; background: var(--bg); flex-direction: column; }
  .scroll { display: flex; flex: 1; min-height: 0; } .col { flex: 1; min-width: 0; display: flex; flex-direction: column; padding: 0 10px 0 8px; }
  .crumb { display: flex; align-items: center; height: 40px; gap: 5px; color: var(--green); font-weight: 700; font-size: 14px; padding: 0 0 0 4px; flex: none;
    background: radial-gradient(16px 26px at 24% 70%, #11180d, transparent), radial-gradient(16px 26px at 74% 60%, #101a0b, transparent), radial-gradient(20px 16px at 55% 10%, #171a1b, transparent), radial-gradient(18px 14px at 55% 85%, #15191a, transparent); }
  .crumb em { font-style: normal; font-weight: 600; margin: 0 1px; font-size: 13px; } .heart { margin: 0 -2px 0 auto; color: #465252; }
  .charts { display: grid; grid-template-columns: 711fr 713fr; gap: 6px; flex: none; }
  .head { display: flex; align-items: center; height: 48px; color: var(--green); flex: none; } h2 { font-size: 14px; line-height: 20px; margin: 4px 0 0; }
  .gauges { display: grid; grid-template-columns: 198fr 198fr 306fr 306fr 198fr 198fr; gap: 5px; flex: none; margin-bottom: 21px; }
  .track { width: 10px; margin-right: 5px; background: #131718; padding-top: 106px; } .track i { display: block; height: 20px; border-radius: 5px; background: #1f2626; }
  .foot { height: 24px; background: #121617; border-radius: 6px 6px 0 0; flex: none; }`,
  `<div class="scroll"><div class="col">
    <div class="crumb"><nd-icon name="bookmark" size="18"></nd-icon><span>System</span><em>&gt;</em><nd-icon name="disk" size="18"></nd-icon><span>Storage</span><em>&gt;</em><span>Disks</span><button class="heart" aria-label="Favorite"><nd-icon name="heart" size="14"></nd-icon></button></div>
    <div class="charts"><nd-chart chart="psi"><nd-dim color="#66aa00" value="0.02" unit="%">full 10</nd-dim><nd-dim color="#ff3c14" value="0.04" unit="%">full 60</nd-dim><nd-dim color="#3366cc" value="0.28" unit="%">full 300</nd-dim></nd-chart>
      <nd-chart chart="time" tools><nd-dim color="#66aa00" value="0" unit="ms">time</nd-dim></nd-chart></div>
    <div class="head"><h2>-- Disks</h2><button class="heart" aria-label="Favorite"><nd-icon name="heart" size="14"></nd-icon></button></div>
    <div class="gauges">
      <nd-gauge r="65" dot="#129812" value="0.0007" vs="31" vy="124" unit="K ops/s" us="15" uy="152">Total Read IOPS</nd-gauge>
      <nd-gauge r="65" dot="#dc3912" value="0" vs="31" vy="124" unit="ops/s" us="15" uy="152">Total Write IOPS</nd-gauge>
      <nd-gauge hover r="101" dot="#129812" value="0.04" vs="47" vy="128" unit="MiB/s" us="22" uy="163">Total Read I/O</nd-gauge>
      <nd-gauge r="101" dot="#dc3912" value="0" vs="47" vy="128" unit="MiB/s" us="22" uy="163">Total Write I/O</nd-gauge>
      <nd-gauge value="0" vs="62" vy="125" unit="%" us="45" uy="178">Max Utilization</nd-gauge>
      <nd-gauge value="0.0007" vs="40" vy="115" unit="s" us="43" uy="166">Max Backlog</nd-gauge>
    </div><nd-table></nd-table></div><div class="track"><i></i></div></div><div class="foot"></div>`);

/* ---------- right panel ---------- */
define('nd-toggle', `:host { display: flex; } label { display: flex; align-items: center; gap: 11px; font-size: 14px; color: #bcc7c7; }
  input { appearance: none; width: 49px; height: 25px; border: 1px solid #2a3131; border-radius: 13px; background: #060909; display: flex; align-items: center; padding-left: 1px; }
  input::before { content: ""; width: 20px; height: 20px; border-radius: 50%; background: #829393; }`,
  `<label><input type="checkbox" role="switch"><slot></slot></label>`);

define('nd-tree-item', `
  :host { display: flex; align-items: center; height: 30px; font-size: 14px; color: #b1bdbd; }
  a { display: flex; align-items: center; height: 30px; padding-top: 2px; }
  :host([b]) { font-weight: 700; } :host([on]) { color: var(--green); }
  .c { width: 25px; display: flex; } nd-icon.i { margin: 0 11px 3px 0; } .c nd-icon { margin-bottom: 3px; }
  .g { height: 30px; flex: none; border-right: 1px solid #272e2e; width: 68px; } .g.on { border-right: 2px solid var(--green); } .g + .g { width: 24px; }
  .l1 { padding-left: 14px; } .l1 nd-icon.i { margin-right: 10px; } .l2 { padding-left: 36px; } .l3 { padding-left: 11px; } .l4 { padding-left: 10px; }`,
  (a, el) => {
    const l = a('lv'), ic = a('icon') ? `<nd-icon class="i" name="${a('icon')}" size="18"></nd-icon>` : '';
    const ch = `<span class="c">${el.hasAttribute('open') ? '<nd-icon name="right" size="11"></nd-icon>' : ''}</span>`;
    if (l < 3) return `<a href="#" class="l${l}">${ch}${ic}<slot></slot></a>`;
    return `<span class="g ${el.hasAttribute('gr') ? 'on' : ''}"></span>${l === '4' ? '<span class="g"></span>' : ''}<a href="#" class="l${l}"><slot></slot></a>`;
  });

define('nd-panel', `
  :host { display: flex; flex-direction: column; width: 394px; flex: none; border-left: 1px solid #272e2e; background: var(--bg); min-height: 0; overflow: hidden; }
  .hd { display: flex; align-items: center; height: 60px; flex: none; padding: 0 11px 2px 10px; border-bottom: 1px solid #272e2e; color: #b1bdbd; gap: 9px; font-size: 14px; } .hd button { margin-left: auto; color: #7c8c8c; }
  .tg { height: 46px; flex: none; padding: 0 10px; display: flex; align-items: center; border-bottom: 1px solid #272e2e; }
  .tabs { display: flex; height: 39px; flex: none; border-bottom: 1px solid #272e2e; padding-left: 2px; }
  .tabs button { width: 83px; background: #171b1c; border-radius: 6px 6px 0 0; justify-content: center; color: #7c8c8c; height: 39px; } .tabs .on { background: #003014; border-bottom: 1px solid #1fae52; border-radius: 6px 0 0 0; }
  .body { padding: 5px 10px 14px; flex: none; border-bottom: 1px solid #272e2e; } .cnt { display: flex; justify-content: space-between; color: var(--muted); font-size: 12px; margin: 3px 0 20px; } .cnt a { color: var(--green); }
  .tree { flex: 1; min-height: 0; background: var(--card); padding-top: 5px; overflow: hidden; position: relative; }
  .tree::after { content: ""; position: absolute; right: 0; top: 0; width: 10px; height: 118px; border-radius: 5px; background: #1f2626; }`,
  `<div class="hd"><nd-icon name="node" size="17"></nd-icon><b>Single Node</b><button aria-label="Collapse panel"><nd-icon name="collapse" size="17"></nd-icon></button></div>
   <div class="tg"><nd-toggle>Metric Correlations</nd-toggle></div>
   <div class="tabs"><button class="on" aria-label="Charts"><nd-icon name="chart" size="21"></nd-icon></button><button aria-label="Alerts"><nd-icon name="bell" size="21"></nd-icon></button><button aria-label="Info"><nd-icon name="info" size="19"></nd-icon></button></div>
   <div class="body"><nd-search label="Search charts"></nd-search><div class="cnt"><span>Showing <b>273</b> of total <b>273</b> charts</span><a href="#">Add more charts</a></div><nd-toggle>Anomaly Rate %</nd-toggle></div>
   <nav class="tree"><nd-tree-item lv="1" b on open icon="bookmark">System</nd-tree-item><nd-tree-item lv="2" b icon="cpu">Compute</nd-tree-item><nd-tree-item lv="2" b icon="ram">Memory</nd-tree-item><nd-tree-item lv="2" b on open icon="disk">Storage</nd-tree-item>
   <nd-tree-item lv="3">Total I/O</nd-tree-item><nd-tree-item lv="3" b>PSI</nd-tree-item><nd-tree-item lv="3" b on gr>Disks</nd-tree-item><nd-tree-item lv="4" gr>I/O</nd-tree-item><nd-tree-item lv="4" gr>IOPS</nd-tree-item><nd-tree-item lv="4" gr>Latency</nd-tree-item><nd-tree-item lv="4" gr>Utilization</nd-tree-item>
   <nd-tree-item lv="3" b>Mount Points</nd-tree-item><nd-tree-item lv="4">Used Space</nd-tree-item><nd-tree-item lv="4">Used Files</nd-tree-item><nd-tree-item lv="3" b>Syscalls</nd-tree-item><nd-tree-item lv="2" b icon="net">Network</nd-tree-item><nd-tree-item lv="2" b icon="hw">Hardware</nd-tree-item></nav>`);

define('nd-window', `
  :host { display: flex; flex-direction: column; height: 100vh; padding-bottom: 2px; box-sizing: border-box; }
  .app { display: flex; flex: 1; min-height: 0; } .view { display: flex; flex-direction: column; flex: 1; min-width: 0; } .work { display: flex; flex: 1; min-height: 0; }`,
  `<br-frame></br-frame><div class="app"><nd-sidebar></nd-sidebar><div class="view"><nd-banner></nd-banner><nd-header></nd-header><nd-tabbar></nd-tabbar><nd-nodebar></nd-nodebar><div class="work"><nd-main></nd-main><nd-panel></nd-panel></div></div></div>`);
</script>
</body>
</html>
